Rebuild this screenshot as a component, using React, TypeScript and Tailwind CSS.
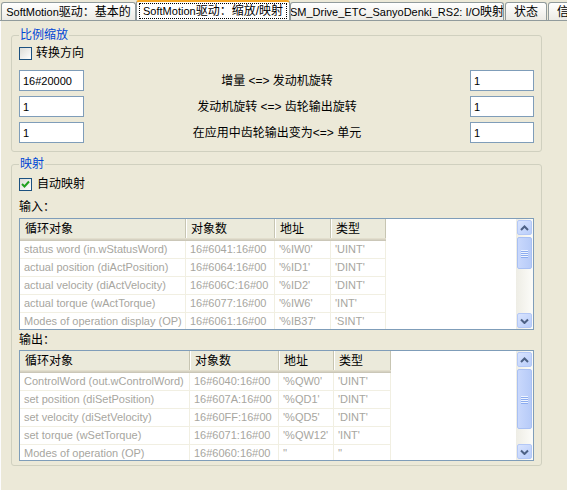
import React from 'react';

const inputRows = [
  ['status word (in.wStatusWord)', '16#6041:16#00', "'%IW0'", "'UINT'"],
  ['actual position (diActPosition)', '16#6064:16#00', "'%ID1'", "'DINT'"],
  ['actual velocity (diActVelocity)', '16#606C:16#00', "'%ID2'", "'DINT'"],
  ['actual torque (wActTorque)', '16#6077:16#00', "'%IW6'", "'INT'"],
  ['Modes of operation display (OP)', '16#6061:16#00', "'%IB37'", "'SINT'"],
];

const outputRows = [
  ['ControlWord (out.wControlWord)', '16#6040:16#00', "'%QW0'", "'UINT'"],
  ['set position (diSetPosition)', '16#607A:16#00', "'%QD1'", "'DINT'"],
  ['set velocity (diSetVelocity)', '16#60FF:16#00', "'%QD5'", "'DINT'"],
  ['set torque (wSetTorque)', '16#6071:16#00', "'%QW12'", "'INT'"],
  ['Modes of operation (OP)', '16#6060:16#00', "''", "''"],
];

const headers = ['循环对象', '对象数', '地址', '类型'];

function Tab({ children, width, gap }: { children: React.ReactNode; width: string; gap?: boolean }) {
  return (
    <div
      className={`${width} ${gap ? 'ml-[1px]' : ''} h-[18px] shrink-0 flex items-center justify-center rounded-t-[3px] border border-b-0 border-[#919B9C] bg-linear-to-b from-white to-[#ECEBE5] leading-[14px] whitespace-nowrap overflow-hidden`}
    >
      {children}
    </div>
  );
}

function CheckBox({ checked }: { checked?: boolean }) {
  return (
    <div className="w-[13px] h-[13px] shrink-0 border border-[#1C5180] bg-linear-to-br from-[#DCDCD7] to-white flex items-center justify-center">
      {checked && (
        <svg width="9" height="9" viewBox="0 0 9 9">
          <path d="M1 4 L3.5 6.5 L8 1.5" fill="none" stroke="#21A121" strokeWidth="2" />
        </svg>
      )}
    </div>
  );
}

function TextBox({ value, width }: { value: string; width: string }) {
  return (
    <input
      readOnly
      value={value}
      className={`${width} h-[21px] shrink-0 border border-[#7F9DB9] bg-white px-[3px] text-[11px] outline-none`}
    />
  );
}

function Arrow({ down }: { down?: boolean }) {
  return (
    <svg width="9" height="6" viewBox="0 0 9 6">
      <polyline
        points={down ? '1,1.5 4.5,5 8,1.5' : '1,5 4.5,1.5 8,5'}
        fill="none"
        stroke="#4D6185"
        strokeWidth="2"
      />
    </svg>
  );
}

function ScrollButton({ down }: { down?: boolean }) {
  return (
    <div className="w-[15px] h-[15px] ml-[1px] rounded-[2px] border border-[#B4C8F6] bg-linear-to-br from-[#D9E4FE] to-[#B9CDFA] flex items-center justify-center">
      <Arrow down={down} />
    </div>
  );
}

function ScrollBar({ thumb }: { thumb: string }) {
  return (
    <div className="w-[17px] shrink-0 flex flex-col py-[1px] bg-linear-to-r from-[#EEEDE5] to-[#FCFCF9]">
      <ScrollButton />
      <div
        className={`${thumb} w-[15px] ml-[1px] mt-[2px] rounded-[2px] border border-[#A9C0F3] bg-linear-to-r from-[#C9D8FC] to-[#B7CBF8] flex flex-col items-center justify-center gap-[1px]`}
      >
        <div className="w-[7px] h-[1px] bg-[#EEF4FE] shadow-[0_1px_#8CACEF]" />
        <div className="w-[7px] h-[1px] bg-[#EEF4FE] shadow-[0_1px_#8CACEF]" />
        <div className="w-[7px] h-[1px] bg-[#EEF4FE] shadow-[0_1px_#8CACEF]" />
        <div className="w-[7px] h-[1px] bg-[#EEF4FE] shadow-[0_1px_#8CACEF]" />
      </div>
      <div className="flex-1" />
      <ScrollButton down />
    </div>
  );
}

function ListTable({ rows, cols, height, thumb }: { rows: string[][]; cols: string[]; height: string; thumb: string }) {
  return (
    <div className={`${height} w-full border border-[#7F9DB9] bg-white flex overflow-hidden`}>
      <div className="flex-1 overflow-hidden">
        <div className="flex h-[22px] w-fit bg-[#EBEADB] shadow-[inset_0_-1px_#CBC7B8,inset_0_-2px_#D6D2C2,inset_0_-3px_#E2DECD]">
          {headers.map((h, i) => (
            <div
              key={h}
              className={`${cols[i]} h-[19px] shrink-0 pl-[5px] flex items-center text-[12px] leading-[14px] border-r border-[#C7C5B2] shadow-[1px_0_white]`}
            >
              {h}
            </div>
          ))}
        </div>
        {rows.map((r, ri) => (
          <div key={ri} className="flex h-[18px] w-fit border-b border-[#F1EFE2]">
            {r.map((c, ci) => (
              <div
                key={ci}
                className={`${cols[ci]} shrink-0 pl-[4px] flex items-center whitespace-nowrap overflow-hidden text-[#A7A6A0] border-r border-[#F1EFE2]`}
              >
                {c}
              </div>
            ))}
          </div>
        ))}
      </div>
      <ScrollBar thumb={thumb} />
    </div>
  );
}

function Group({ title, className, children }: { title: string; className?: string; children: React.ReactNode }) {
  return (
    <fieldset className={`ml-[10px] w-[531px] min-w-0 rounded-[3px] border border-[#D0D0BF] px-[7px] ${className ?? ''}`}>
      <legend className="px-[1px] text-[12px] leading-[14px] text-[#0046D5]">{title}</legend>
      {children}
    </fieldset>
  );
}

function ScaleRow({ left, label, right }: { left: string; label: React.ReactNode; right: string }) {
  return (
    <div className="flex items-center h-[21px]">
      <TextBox value={left} width="w-[65px]" />
      <div className="flex-1 text-center text-[12px] leading-[14px]">{label}</div>
      <TextBox value={right} width="w-[64px]" />
    </div>
  );
}

export default function App() {
  return (
    <div className="w-[567px] h-[490px] overflow-hidden bg-[#ECE9D8] text-[11px] text-black font-['Liberation_Sans','Noto_Sans_CJK_SC',sans-serif]">
      {/* tab strip */}
      <div className="flex items-end h-[21px] border-b border-[#919B9C] pl-[1px] overflow-hidden">
        <Tab width="w-[135px]">
          <span>SoftMotion</span>
          <span className="text-[12px]">驱动：基本的</span>
        </Tab>
        <div className="w-[154px] h-[21px] -mb-[1px] shrink-0 rounded-t-[3px] border-x border-[#919B9C] border-t-[2px] border-t-[#F5A623] bg-white flex items-start justify-center pt-[1px]">
          <span className="border border-dotted border-black px-[3px] leading-[14px] whitespace-nowrap">
            <span>SoftMotion</span>
            <span className="text-[12px]">驱动：缩放/映射</span>
          </span>
        </div>
        <Tab width="w-[214px]">
          <span>SM_Drive_ETC_SanyoDenki_RS2: I/O</span>
          <span className="text-[12px]">映射</span>
        </Tab>
        <Tab width="w-[42px]" gap>
          <span className="text-[12px]">状态</span>
        </Tab>
        <Tab width="w-[42px]" gap>
          <span className="text-[12px]">信息</span>
        </Tab>
      </div>

      {/* tab page */}
      <div className="h-[469px] border-l border-[#FCFCFE] flex flex-col">
        <Group title="比例缩放" className="mt-[7px] pb-[8px]">
          <div className="mt-[5px] flex items-center h-[13px]">
            <CheckBox />
            <span className="ml-[4px] text-[12px] leading-[13px]">转换方向</span>
          </div>
          <div className="mt-[10px] flex flex-col gap-[5px]">
            <ScaleRow left="16#20000" right="1" label={<>增量 &lt;=&gt; 发动机旋转</>} />
            <ScaleRow left="1" right="1" label={<>发动机旋转 &lt;=&gt; 齿轮输出旋转</>} />
            <ScaleRow left="1" right="1" label={<>在应用中齿轮输出变为&lt;=&gt; 单元</>} />
          </div>
        </Group>

        <Group title="映射" className="mt-[5px] pb-[4px]">
          <div className="mt-[7px] flex items-center h-[13px]">
            <CheckBox checked />
            <span className="ml-[5px] text-[12px] leading-[13px]">自动映射</span>
          </div>
          <div className="mt-[9px] text-[12px] leading-[14px]">输入：</div>
          <div className="mt-[4px]">
            <ListTable
              rows={inputRows}
              cols={['w-[166px]', 'w-[89px]', 'w-[56px]', 'w-[55px]']}
              height="h-[112px]"
              thumb="h-[32px]"
            />
          </div>
          <div className="mt-[3px] text-[12px] leading-[14px]">输出：</div>
          <div className="mt-[3px]">
            <ListTable
              rows={outputRows}
              cols={['w-[170px]', 'w-[89px]', 'w-[55px]', 'w-[57px]']}
              height="h-[111px]"
              thumb="h-[60px]"
            />
          </div>
        </Group>
      </div>
    </div>
  );
}
